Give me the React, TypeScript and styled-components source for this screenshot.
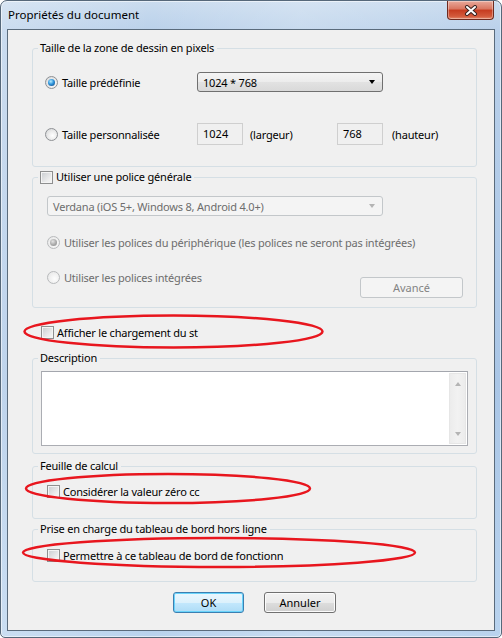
import styled, { createGlobalStyle, css } from 'styled-components';

const GlobalStyle = createGlobalStyle`
  html, body { margin: 0; padding: 0; background: #ffffff; }
  body {
    font-family: 'Noto Sans', 'Liberation Sans', sans-serif;
    font-size: 11px;
    letter-spacing: -0.2px;
    color: #000;
  }
  * { box-sizing: border-box; }
`;

const Window = styled.div`
  position: relative;
  width: 502px;
  height: 638px;
  border: 1px solid #56687a;
  border-radius: 7px 7px 5px 5px;
  padding: 0 6px 6px 6px;
  display: flex;
  flex-direction: column;
  background:
    linear-gradient(90deg, rgba(255, 255, 255, 0.25), rgba(255, 255, 255, 0) 30%, rgba(255, 255, 255, 0.2) 60%, rgba(255, 255, 255, 0) 100%),
    linear-gradient(180deg, #cadcef 0%, #b9d0ea 5%, #aac6e6 60%, #b9d3ee 100%);
  box-shadow: inset 0 0 0 1px rgba(255, 255, 255, 0.55);
`;

const TitleBar = styled.div`
  height: 28px;
  display: flex;
  align-items: flex-start;
  justify-content: space-between;
`;

const Title = styled.div`
  margin: 6px 0 0 1px;
  font-size: 11.5px;
  letter-spacing: 0;
  color: #000;
`;

const CloseButton = styled.div`
  width: 47px;
  height: 19px;
  margin-right: 1px;
  border: 1px solid #6e2a1f;
  border-top: none;
  border-radius: 0 0 4px 4px;
  display: flex;
  align-items: center;
  justify-content: center;
  background: linear-gradient(180deg, #e9a99b 0%, #d9755f 45%, #c63b1f 50%, #d35a3c 85%, #e58a6c 100%);
  box-shadow: inset 0 0 0 1px rgba(255, 255, 255, 0.35);
`;

const Client = styled.div`
  position: relative;
  flex: 1;
  background: #f0f0f0;
  border: 1px solid #5a6b7c;
  padding: 11px 17px 0 24px;
  display: flex;
  flex-direction: column;
`;

const Group = styled.fieldset<{ $mt: number }>`
  margin: ${p => p.$mt}px 0 0 0;
  padding: 0;
  border: 1px solid #d5dfe5;
  border-radius: 3px;
  min-width: 0;
`;

const Legend = styled.legend`
  margin-left: 5px;
  padding: 0 3px 0 2px;
  line-height: 14px;
  height: 14px;
`;

const LegendInner = styled.span`
  display: inline-flex;
  align-items: center;
  gap: 3px;
`;

const GroupBody = styled.div<{ $pad: string }>`
  padding: ${p => p.$pad};
  display: flex;
  flex-direction: column;
`;

const SizeRow = styled.div<{ $mt?: number }>`
  display: grid;
  grid-template-columns: 152px 46px 94px 46px auto;
  align-items: center;
  margin-top: ${p => p.$mt ?? 0}px;
`;

const OptionLabel = styled.label<{ $disabled?: boolean }>`
  display: flex;
  align-items: center;
  gap: 4px;
  line-height: 15px;
  white-space: nowrap;
  color: ${p => (p.$disabled ? '#6d6d6d' : '#000')};
`;

const Radio = styled.span<{ $checked?: boolean; $disabled?: boolean }>`
  position: relative;
  width: 13px;
  height: 13px;
  flex: none;
  border-radius: 50%;
  border: 1px solid ${p => (p.$disabled ? '#b8babc' : '#8e9194')};
  background: ${p =>
    p.$disabled
      ? 'radial-gradient(circle at 60% 60%, #fdfdfd 0, #f2f2f2 45%, #e3e3e3 100%)'
      : 'radial-gradient(circle at 60% 60%, #ffffff 0, #ececec 45%, #cfd1d3 100%)'};
  ${p =>
    p.$checked &&
    css`
      &::after {
        content: '';
        position: absolute;
        left: 2px;
        top: 2px;
        width: 7px;
        height: 7px;
        border-radius: 50%;
        background: ${p.$disabled
          ? 'radial-gradient(circle at 40% 35%, #e4e4e4 0, #a9a9a9 55%, #8a8a8a 100%)'
          : 'radial-gradient(circle at 40% 35%, #b6ecff 0, #2f95dc 45%, #0b3a72 100%)'};
      }
    `}
`;

const CheckBox = styled.span`
  width: 13px;
  height: 13px;
  flex: none;
  border: 1px solid #8e8f8f;
  background: linear-gradient(135deg, #c9ccd0 0%, #eeeeee 70%, #f6f6f6 100%);
  box-shadow: inset 0 0 0 1px #f4f4f4;
`;

const Combo = styled.div<{ $disabled?: boolean; $w: number }>`
  width: ${p => p.$w}px;
  height: 20px;
  display: flex;
  align-items: center;
  justify-content: space-between;
  padding: 0 7px 0 5px;
  border-radius: 3px;
  white-space: nowrap;
  ${p =>
    p.$disabled
      ? css`
          border: 1px solid #c3c7ca;
          background: #f4f4f4;
          color: #6d6d6d;
        `
      : css`
          border: 1px solid #707070;
          background: linear-gradient(180deg, #f4f4f4 0%, #ececec 50%, #e2e2e2 51%, #d9d9d9 100%);
          color: #000;
        `}
`;

const Arrow = styled.span<{ $disabled?: boolean; $up?: boolean }>`
  width: 0;
  height: 0;
  border-left: 3.5px solid transparent;
  border-right: 3.5px solid transparent;
  ${p =>
    p.$up
      ? css`border-bottom: 4px solid ${p.$disabled ? '#b4b4b4' : '#000'};`
      : css`border-top: 4px solid ${p.$disabled ? '#b4b4b4' : '#000'};`}
`;

const TextBox = styled.input`
  width: 46px;
  height: 22px;
  padding: 0 5px 2px;
  border: 1px solid #cfcfcf;
  background: #f0f0f0;
  font: inherit;
  color: #000;
  outline: none;
`;

const Unit = styled.span<{ $pl: number }>`
  padding-left: ${p => p.$pl}px;
`;

const OptionRow = styled.div<{ $mt: number }>`
  display: flex;
  align-items: flex-start;
  justify-content: space-between;
  margin-top: ${p => p.$mt}px;
`;

const Button = styled.button<{ $default?: boolean; $w: number; $mt?: number }>`
  width: ${p => p.$w}px;
  height: 21px;
  margin-top: ${p => p.$mt ?? 0}px;
  padding: 0 0 1px;
  border-radius: 3px;
  font: inherit;
  ${p =>
    p.disabled
      ? css`
          border: 1px solid #c3c7ca;
          background: #f4f4f4;
          color: #838383;
        `
      : p.$default
      ? css`
          border: 1px solid #3c7fb1;
          background: linear-gradient(180deg, #ebf7fe 0%, #dcf1fc 50%, #c3e8fd 51%, #aedcf6 100%);
          box-shadow: inset 0 0 0 1px #6ad4fb;
          color: #000;
        `
      : css`
          border: 1px solid #707070;
          background: linear-gradient(180deg, #f2f2f2 0%, #ebebeb 50%, #dddddd 51%, #cfcfcf 100%);
          box-shadow: inset 0 0 0 1px #fbfbfb;
          color: #000;
        `}
`;

const CheckRow = styled.label<{ $ml: number; $mt?: number }>`
  display: flex;
  align-items: center;
  gap: 3px;
  line-height: 15px;
  white-space: nowrap;
  margin-left: ${p => p.$ml}px;
  margin-top: ${p => p.$mt ?? 0}px;
`;

const Memo = styled.div`
  height: 75px;
  display: flex;
  border: 1px solid #abadb3;
  border-top-color: #a3a6ad;
  background: #fff;
`;

const MemoText = styled.div`
  flex: 1;
`;

const ScrollBar = styled.div`
  width: 17px;
  margin: 1px 1px 1px 0;
  display: flex;
  flex-direction: column;
  align-items: center;
  justify-content: space-between;
  padding: 8px 0 7px;
  border: 1px solid #e6e6e6;
  background: linear-gradient(90deg, #ececec, #f2f2f2 50%, #ececec);
`;

const ButtonRow = styled.div`
  display: flex;
  justify-content: center;
  gap: 20px;
  margin-top: 10px;
`;

const Annotations = styled.svg`
  position: absolute;
  left: -1px;
  top: -1px;
  pointer-events: none;
`;

export default function App() {
  return (
    <>
      <GlobalStyle />
      <Window>
        <TitleBar>
          <Title>Propriétés du document</Title>
          <CloseButton>
            <svg width="14" height="11" viewBox="0 0 14 11">
              <path d="M3 2 L11 9 M11 2 L3 9" stroke="#3a2320" strokeWidth="4" strokeLinecap="round" />
              <path d="M3 2 L11 9 M11 2 L3 9" stroke="#ffffff" strokeWidth="2" strokeLinecap="round" />
            </svg>
          </CloseButton>
        </TitleBar>

        <Client>
          <Group $mt={0}>
            <Legend>Taille de la zone de dessin en pixels</Legend>
            <GroupBody $pad="17px 0 21px 12px">
              <SizeRow>
                <OptionLabel>
                  <Radio $checked />
                  Taille prédéfinie
                </OptionLabel>
                <Combo $w={186} style={{ gridColumn: '2 / 5' }}>
                  1024 * 768
                  <Arrow />
                </Combo>
              </SizeRow>
              <SizeRow $mt={31}>
                <OptionLabel>
                  <Radio />
                  Taille personnalisée
                </OptionLabel>
                <TextBox readOnly value="1024" />
                <Unit $pl={7}>(largeur)</Unit>
                <TextBox readOnly value="768" />
                <Unit $pl={9}>(hauteur)</Unit>
              </SizeRow>
            </GroupBody>
          </Group>

          <Group $mt={3}>
            <Legend>
              <LegendInner>
                <CheckBox />
                Utiliser une police générale
              </LegendInner>
            </Legend>
            <GroupBody $pad="12px 13px 9px 14px">
              <Combo $w={336} $disabled>
                Verdana (iOS 5+, Windows 8, Android 4.0+)
                <Arrow $disabled />
              </Combo>
              <OptionRow $mt={19}>
                <OptionLabel $disabled>
                  <Radio $checked $disabled />
                  Utiliser les polices du périphérique (les polices ne seront pas intégrées)
                </OptionLabel>
              </OptionRow>
              <OptionRow $mt={20}>
                <OptionLabel $disabled>
                  <Radio $disabled />
                  Utiliser les polices intégrées
                </OptionLabel>
                <Button disabled $w={103} $mt={7}>
                  Avancé
                </Button>
              </OptionRow>
            </GroupBody>
          </Group>

          <CheckRow $ml={9} $mt={17}>
            <CheckBox />
            Afficher le chargement du st
          </CheckRow>

          <Group $mt={11}>
            <Legend>Description</Legend>
            <GroupBody $pad="6px 8px 7px 8px">
              <Memo>
                <MemoText />
                <ScrollBar>
                  <Arrow $up $disabled />
                  <Arrow $disabled />
                </ScrollBar>
              </Memo>
            </GroupBody>
          </Group>

          <Group $mt={5}>
            <Legend>Feuille de calcul</Legend>
            <GroupBody $pad="11px 0 19px 0">
              <CheckRow $ml={14}>
                <CheckBox />
                Considérer la valeur zéro cc
              </CheckRow>
            </GroupBody>
          </Group>

          <Group $mt={3}>
            <Legend>Prise en charge du tableau de bord hors ligne</Legend>
            <GroupBody $pad="12px 0 18px 0">
              <CheckRow $ml={14}>
                <CheckBox />
                Permettre à ce tableau de bord de fonctionn
              </CheckRow>
            </GroupBody>
          </Group>

          <ButtonRow>
            <Button $default $w={71}>OK</Button>
            <Button $w={72}>Annuler</Button>
          </ButtonRow>
        </Client>

        <Annotations width="502" height="638" viewBox="0 0 502 638">
          <g fill="none" stroke="#e8161e" strokeWidth="2.5">
            <ellipse cx="173.5" cy="331.5" rx="149" ry="16" />
            <ellipse cx="168" cy="488.5" rx="142" ry="14.5" />
            <ellipse cx="219" cy="552.5" rx="196" ry="14.5" />
          </g>
        </Annotations>
      </Window>
    </>
  );
}
